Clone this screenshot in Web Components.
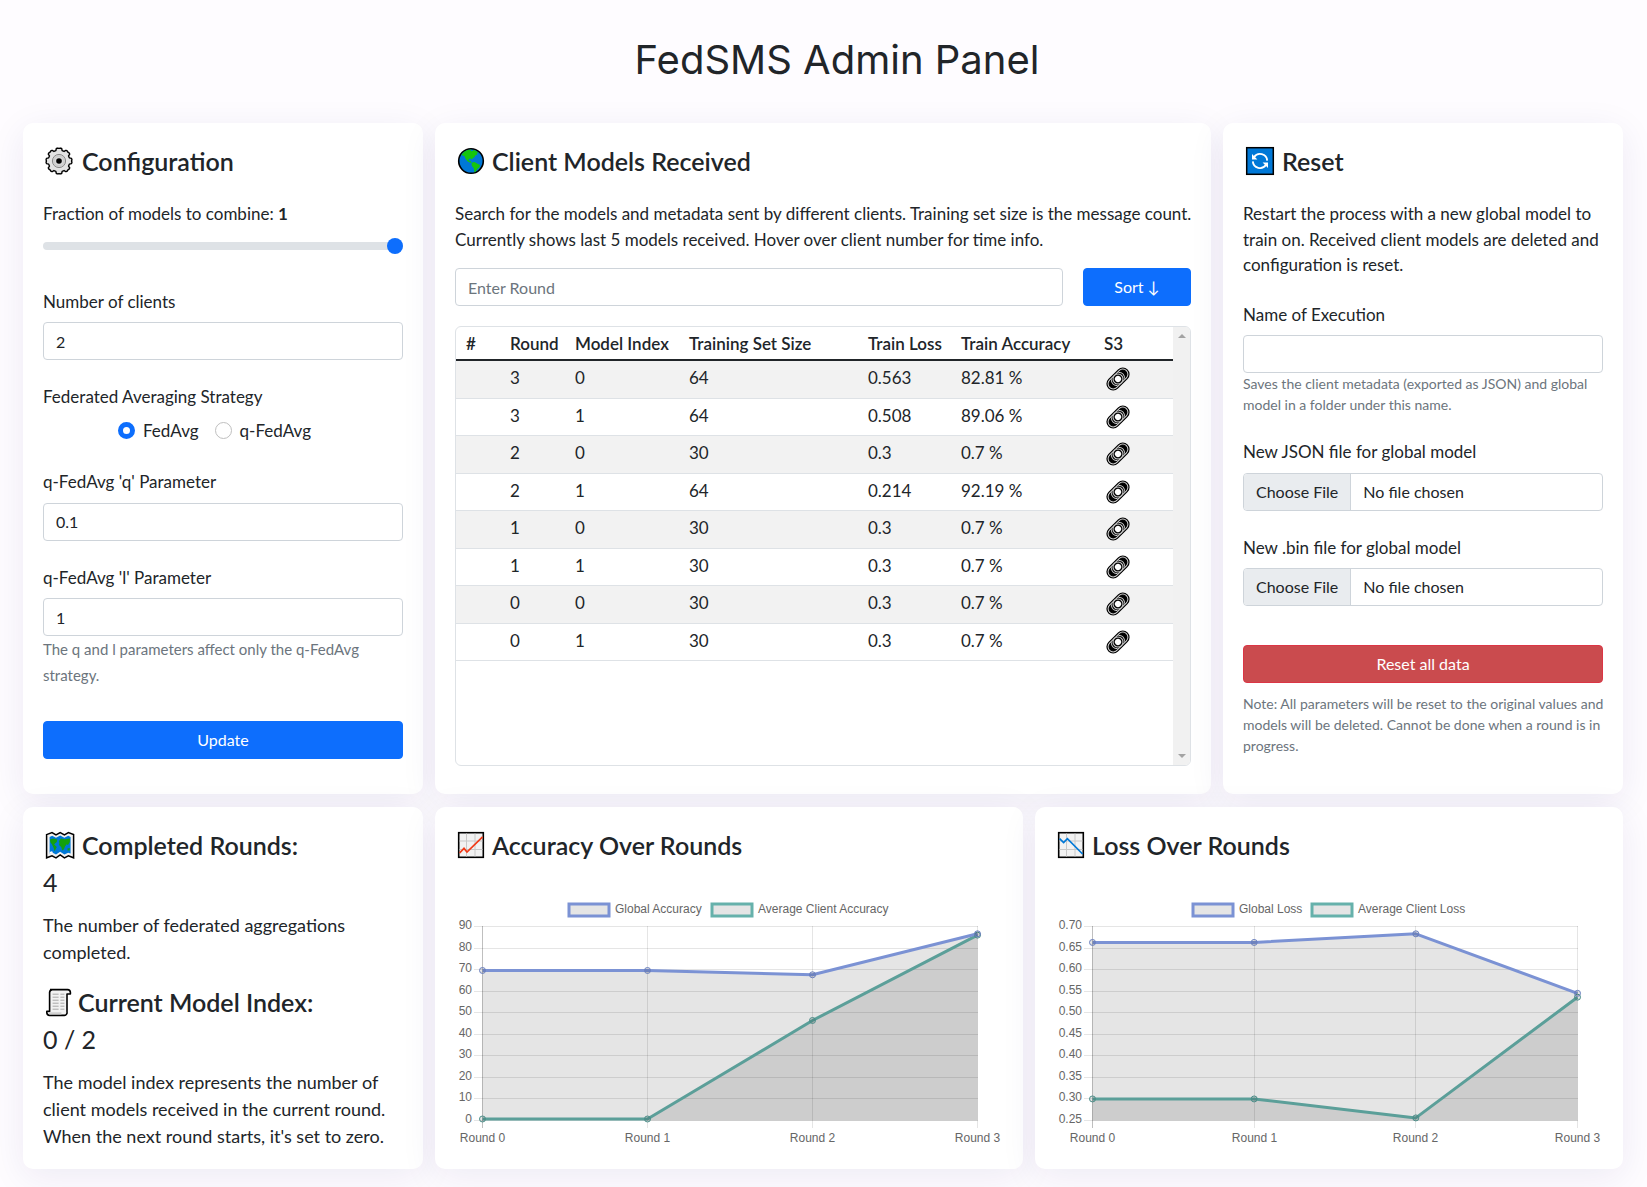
<!DOCTYPE html>
<html lang="en">
<head>
<meta charset="utf-8">
<meta name="viewport" content="width=device-width, initial-scale=1">
<title>FedSMS Admin Panel</title>
<style>
  body { margin: 0; background: #fefcff; color: #212529; font: 17px/1.5 Lato, "Liberation Sans", sans-serif; }
</style>
</head>
<body>
<fed-dashboard></fed-dashboard>

<script>
const BASE = `
  *, *::before, *::after { box-sizing: border-box; }
  :host { display: block; }
  p { margin: 0; }
  label { display: block; margin-bottom: 8px; }
  small { display: block; color: #6c757d; }
`;

function define(name, css, render) {
  customElements.define(name, class extends HTMLElement {
    constructor() {
      super();
      this.attachShadow({ mode: 'open' });
    }
    connectedCallback() {
      this.shadowRoot.innerHTML = `<style>${BASE}${css}</style>${render(this)}`;
    }
  });
}

/* ---------- icons ---------- */
const gearPath = (() => {
  const pts = [];
  for (let i = 0; i < 8; i++) {
    for (const [d, r] of [[-17, 10.8], [-12, 12.8], [-6, 13], [0, 12.6], [6, 13], [12, 12.8], [17, 10.8]]) {
      const a = (i * 45 + d) * Math.PI / 180;
      pts.push((16 + r * Math.sin(a)).toFixed(2) + ' ' + (16 - r * Math.cos(a)).toFixed(2));
    }
  }
  return 'M' + pts.join('L') + 'Z';
})();

const ICONS = {
  gear: [32, `<path d="${gearPath}" fill="#e3e3e3" stroke="#000" stroke-width="1.4" stroke-linejoin="round"/>
    <circle cx="16" cy="16" r="6.6" fill="#d2d2d2" stroke="#8a8a8a"/><circle cx="16" cy="16" r="4.8" fill="#d8d8d8" stroke="#c4c4c4" stroke-width=".6"/>
    <circle cx="16" cy="16" r="2.8"/>`],
  globe: [30, `<circle cx="16" cy="16" r="12.3" fill="#0078d7" stroke="#000" stroke-width="1.6"/>
    <path d="M6.4 10 9.2 6.8 12.6 4.9 16.4 4.4 15.4 6.2 17.6 6 18.4 5 21.4 6 24 8.4 21.8 7.8 22.2 10 20.4 10.2 19.4 12.2 17.6 13.2 17 14.8 15.6 13.4 13.6 14 14 15.8 15.6 16 16.6 17.4 15.4 17.8 12.4 16.2 10.4 13.4 9.4 11 7.6 10.6Z M16.6 17.8 19.6 17 22 18.4 25 20 24.4 22.6 22.4 23.8 21 26.2 19.4 27.4 18.8 23.2 16.8 20.8Z" fill="#16c60c"/>`],
  reset: [32, `<rect x="3.7" y="2.7" width="26.6" height="26.6" fill="#0078d7" stroke="#000" stroke-width="1.5"/>
    <g fill="none" stroke="#fff" stroke-width="1.8"><path d="M11 12.2A7.2 7.2 0 0 1 24.2 15.6"/><path d="M9.8 16.4A7.2 7.2 0 0 0 23 19.8"/></g>
    <path d="M9 9V14.4H14.4Z M25 23V17.6H19.6Z" fill="#fff"/>`],
  map: [32, `<path d="M3.6 5.6 9 3.6 13 6 17.2 3.6 21.4 6 25.4 3.6 30.6 5.6V28.8L25.4 26.8 21.4 28.8 17.2 26 13 28.8 9 26.8 3.6 28.8Z" fill="#f2f2f2" stroke="#000" stroke-width="1.5"/>
    <path d="M6.6 8 9.2 6.8 13 8.8 17.2 6.4 21.4 8.8 25.2 6.8 27.6 8V24.6L25.2 23.8 21.4 25.4 17.2 22.8 13 25.4 9.2 23.6 6.6 24.6Z" fill="#0078d7"/>
    <path d="M7 10.6 10.4 9.4 14.2 10.6 13.8 13 12 14.4 11.2 15.4 13.8 18 12.6 20.2 11.6 22.4 10.8 19.2 9 15.4 7.4 13.2Z M16 12 18 9.4 21.4 10.2 27 9.6 26.8 13 25 16 23.6 15.2 22 17.4 20.8 20.6 19.2 21.4 18.2 18 16 16 16.4 14Z M24.4 19.6 26.8 19 26.6 21.4 24.6 21.6Z" fill="#13a10e"/>
    <path d="M6.6 23 9 22.2 10 23.4 6.8 24.4Z" fill="#fff"/>`],
  scroll: [28, `<path d="M7 3.6H24.6A3 3 0 0 1 27.4 6.4V8H24V25.6A3 3 0 0 1 21.4 29.4H6.6A3 3 0 0 1 3.8 26.6V25.4H6.6V6.4A3 3 0 0 1 9.2 3.6" fill="#f2f2f2" stroke="#000" stroke-width="1.6" stroke-linejoin="round"/>
    <path d="M4.6 26.2H18.4V28.6H6.4Z" fill="#d0d0d0"/>
    <path d="M9.6 8.2H15.6M17.4 8.2H21.4M9.6 11.2H15.6M17.4 11.2H21.4M9.6 14.2H15.6M17.4 14.2H21.4M9.6 17.2H15.6M17.4 17.2H21.4M9.6 20.2H15.6M17.4 20.2H21.4M9.6 23.2H15.6M17.4 23.2H21.4" stroke="#a8a8a8"/>`],
  rise: [30, `<rect x="3.7" y="3.7" width="24.6" height="24.6" fill="#f2f2f2" stroke="#000" stroke-width="1.6"/>
    <path d="M11.5 4.5V27.5M20 4.5V27.5M4.5 12H27.5M4.5 20.5H27.5" stroke="#c8c8c8"/>
    <path d="M4.6 24 9 19.4 12 23 27.6 7.8" fill="none" stroke="#f03a17" stroke-width="1.7"/>`],
  fall: [30, `<rect x="3.7" y="3.7" width="24.6" height="24.6" fill="#f2f2f2" stroke="#000" stroke-width="1.6"/>
    <path d="M11.5 4.5V27.5M20 4.5V27.5M4.5 12H27.5M4.5 20.5H27.5" stroke="#c8c8c8"/>
    <path d="M4.6 9.6 8.6 13.6 12.4 9.6 27.6 25" fill="none" stroke="#0078d7" stroke-width="1.7"/>`],
};

define('emoji-icon', ':host{display:block;flex:none} svg{display:block}', el => {
  const [w, art] = ICONS[el.getAttribute('name')];
  return `<svg width="${w}" height="32" viewBox="0 0 ${w} 32" overflow="visible" aria-hidden="true">${art}</svg>`;
});

define('link-icon', ':host{display:block} svg{display:block}', () => `
  <svg width="28" height="28" viewBox="0 0 28 28" aria-hidden="true">
    <g transform="rotate(-45 14 14)">
      <rect x="1" y="7.8" width="26" height="12.4" rx="6.2" stroke="#000" stroke-width="1.2" fill="#d4d4d4"/>
      <rect x="3.2" y="10" width="21.6" height="8" rx="4" stroke="#000" stroke-width="1.2"/>
      <path d="M9.2 9.8A5 5 0 0 0 9.2 18.2M18.8 9.8A5 5 0 0 1 18.8 18.2" fill="none" stroke="#d4d4d4" stroke-width="1"/>
      <circle cx="14" cy="14" r="5" stroke="#d4d4d4" stroke-width="1"/>
      <circle cx="14" cy="14" r="3.1" fill="#fff"/>
    </g>
  </svg>`);

/* ---------- layout pieces ---------- */
define('panel-card', `
  :host { background: #fff; border-radius: 10px; padding: 20px; box-shadow: 0 8px 36px rgba(40, 30, 110, .08); min-width: 0; }
`, () => '<slot></slot>');

define('panel-heading', `
  h2 { display: flex; align-items: center; gap: 7px; height: 36px; margin: 0; font-size: 25px; font-weight: 600; line-height: 36px; white-space: nowrap; }
`, el => `<h2><emoji-icon name="${el.getAttribute('icon')}"></emoji-icon><slot></slot></h2>`);

const CONTROL = `
  input { display: block; width: 100%; height: 38px; margin: 0; padding: 6px 12px; border: 1px solid #ced4da; border-radius: 4px;
    background: #fff; color: #212529; font: 16px/24px Lato, "Liberation Sans", sans-serif; outline: 0; }
  input::placeholder { color: #6c757d; opacity: 1; }
  input::file-selector-button { height: 36px; margin: -6px 12px -6px -12px; padding: 6px 12px; border: 0 solid #ced4da; border-right-width: 1px;
    border-radius: 0; background: #e9ecef; color: #212529; font: inherit; }
  input[type=file] { overflow: hidden; }
`;

define('form-field', CONTROL + `
  ::slotted(small) { display: block; color: #6c757d; }
`, el => `
  <label for="control">${el.getAttribute('label')}</label>
  <input id="control" type="${el.getAttribute('type') || 'text'}" ${el.hasAttribute('value') ? `value="${el.getAttribute('value')}"` : ''}>
  <slot></slot>`);

define('range-field', `
  output { font-weight: 700; }
  label { margin-bottom: 7px; }
  input { appearance: none; display: block; width: 100%; height: 24px; margin: 0; background: transparent; }
  input::-webkit-slider-runnable-track { height: 8px; border-radius: 8px; background: #dee2e6; }
  input::-webkit-slider-thumb { appearance: none; width: 16px; height: 16px; margin-top: -4px; border-radius: 50%; background: #0d6efd; }
`, () => `
  <label for="fraction">Fraction of models to combine: <output for="fraction">1</output></label>
  <input id="fraction" type="range" min="0" max="1" step="0.1" value="1">`);

define('strategy-picker', `
  fieldset { margin: 0; padding: 0; border: 0; min-width: 0; }
  legend { padding: 0; margin-bottom: 8px; }
  .options { display: flex; justify-content: center; gap: 16px; padding: 0 17px 2px 0; }
  label { display: flex; align-items: center; gap: 8px; margin: 0; }
  input { appearance: none; width: 17px; height: 17px; margin: 0; border: 1px solid #bfbfbf; border-radius: 50%; background: #fff; }
  input:checked { border: 5px solid #0d6efd; }
`, () => `
  <fieldset>
    <legend>Federated Averaging Strategy</legend>
    <div class="options">
      <label><input type="radio" name="strategy" checked>FedAvg</label>
      <label><input type="radio" name="strategy">q-FedAvg</label>
    </div>
  </fieldset>`);

define('action-button', `
  button { display: block; width: 100%; height: 38px; padding: 6px 12px; border: 1px solid #0d6efd; border-radius: 4px; background: #0d6efd;
    color: #fff; font: 16px/24px Lato, "Liberation Sans", sans-serif; cursor: pointer; }
  :host([danger]) button { border-color: #dc3545; background: #ca4b4e; }
`, () => '<button type="button"><slot></slot></button>');

/* ---------- table ---------- */
const ROWS = [
  [3, 0, 64, '0.563', '82.81 %'], [3, 1, 64, '0.508', '89.06 %'],
  [2, 0, 30, '0.3', '0.7 %'], [2, 1, 64, '0.214', '92.19 %'],
  [1, 0, 30, '0.3', '0.7 %'], [1, 1, 30, '0.3', '0.7 %'],
  [0, 0, 30, '0.3', '0.7 %'], [0, 1, 30, '0.3', '0.7 %'],
];

define('models-table', `
  .frame { display: flex; height: 440px; border: 1px solid #dee2e6; border-radius: 6px; overflow: hidden; }
  .body { flex: 1; min-width: 0; overflow: hidden; }
  table { width: 100%; table-layout: fixed; border-collapse: separate; border-spacing: 0; }
  th, td { padding: 4px 0 0 10px; text-align: left; vertical-align: top; white-space: nowrap; }
  th { font-weight: 600; height: 34px; border-bottom: 2px solid #212529; line-height: 26px; }
  td { height: 37px; border-bottom: 1px solid #dee2e6; }
  tr:nth-child(odd) td { height: 38px; background: #f2f2f2; }
  a { display: block; width: 28px; height: 28px; }
  .bar { flex: none; width: 17px; display: flex; flex-direction: column; justify-content: space-between; align-items: center; padding: 7px 0; background: #f1f1f1; }
  .bar i { border: 4px solid transparent; border-top-width: 0; border-bottom-color: #a3a3a3; }
  .bar i:last-child { border-width: 4px 4px 0; border-top-color: #a3a3a3; }
`, () => `
  <div class="frame">
    <div class="body">
      <table>
        <colgroup><col style="width:44px"><col style="width:65px"><col style="width:114px"><col style="width:179px"><col style="width:93px"><col style="width:143px"><col style="width:79px"></colgroup>
        <thead><tr><th>#</th><th>Round</th><th>Model Index</th><th>Training Set Size</th><th>Train Loss</th><th>Train Accuracy</th><th>S3</th></tr></thead>
        <tbody>${ROWS.map(r => `<tr><td></td>${r.map(c => `<td>${c}</td>`).join('')}<td><a href="#" aria-label="Open in S3"><link-icon></link-icon></a></td></tr>`).join('')}</tbody>
      </table>
    </div>
    <div class="bar" aria-hidden="true"><i></i><i></i></div>
  </div>`);

define('models-search', CONTROL + `
  form { display: flex; gap: 20px; }
  input { flex: 1; min-width: 0; }
  action-button { flex: 0 0 108px; }
`, () => `<form><input type="text" placeholder="Enter Round" aria-label="Round"><action-button>Sort ↓</action-button></form>`);

/* ---------- charts ---------- */
const BLUE = '#7b92d4', GREEN = '#66b1ab', FILL = 'rgba(0,0,0,.1)';
const CHARTS = {
  accuracy: {
    ticks: ['90', '80', '70', '60', '50', '40', '30', '20', '10', '0'], min: 0, max: 90, left: 27,
    legend: [[114, 'Global Accuracy'], [257, 'Average Client Accuracy']],
    global: [69.6, 69.6, 67.6, 86.6], client: [0.7, 0.7, 46.4, 86],
  },
  loss: {
    ticks: ['0.70', '0.65', '0.60', '0.55', '0.50', '0.45', '0.40', '0.35', '0.30', '0.25'], min: .25, max: .7, left: 37,
    legend: [[138, 'Global Loss'], [257, 'Average Client Loss']],
    global: [.663, .663, .683, .545], client: [.3, .3, .256, .536],
  },
};

define('line-chart', `
  svg { display: block; width: 100%; height: auto; font: 12px "Liberation Sans", Arial, sans-serif; }
  text { fill: #666; }
`, el => {
  const c = CHARTS[el.getAttribute('data')], top = 33, bottom = 227, right = 522;
  const x = i => c.left + .5 + i * (right - c.left) / 3;
  const y = v => bottom + .5 - (v - c.min) / (c.max - c.min) * (bottom - top);
  const rows = c.ticks.map((t, i) => {
    const py = Math.round(top + i * (bottom - top) / 9);
    return `<path d="M${c.left - 8} ${py + .5}H${right + 1}" stroke="${FILL}"/><text x="${c.left - 10}" y="${py + 3}" text-anchor="end">${t}</text>`;
  }).join('');
  const cols = [0, 1, 2, 3].map(i => {
    const px = Math.floor(x(i)) + .5;
    return `<path d="M${px} ${top}V${bottom + 8}" stroke="rgba(0,0,0,${i ? .1 : .25})"/><text x="${px}" y="249" text-anchor="middle">Round ${i}</text>`;
  }).join('');
  const series = (data, color) => {
    const line = 'M' + data.map((v, i) => `${x(i)} ${y(v)}`).join('L');
    return `<path d="${line}V${bottom + .5}H${x(0)}Z" fill="${FILL}"/><path d="${line}" fill="none" stroke="${color}" stroke-width="3" stroke-linejoin="round"/>`;
  };
  const dots = (data, color) => data.map((v, i) => `<circle cx="${x(i)}" cy="${y(v)}" r="3" fill="${FILL}" stroke="${color}"/>`).join('');
  const legend = c.legend.map(([lx, name], i) =>
    `<rect x="${lx}" y="11" width="40" height="12" fill="#e5e5e5" stroke="${i ? GREEN : BLUE}" stroke-width="3"/><text x="${lx + 46}" y="20">${name}</text>`).join('');
  return `<svg viewBox="0 0 548 256" role="img">${legend}${rows}${cols}
    ${series(c.client, GREEN)}${series(c.global, BLUE)}${dots(c.client, '#4b8f8a')}${dots(c.global, '#6a80c0')}</svg>`;
});

/* ---------- page ---------- */
define('stat-block', `
  .value { margin-top: 1px; font-size: 25px; line-height: 36px; }
  p { margin-top: 12px; font-size: 18px; }
`, el => `
  <panel-heading icon="${el.getAttribute('icon')}">${el.getAttribute('label')}</panel-heading>
  <div class="value">${el.getAttribute('value')}</div>
  <p><slot></slot></p>`);

define('fed-dashboard', `
  :host { padding: 0 24px 20px 23px; }
  h1 { margin: 0; padding: 36px 0 39px 28px; text-align: center; font: 400 40px/48px Inter, sans-serif; }
  .row { display: grid; gap: 12px; }
  .top { grid-template-columns: 100fr 194fr 100fr; margin-bottom: 13px; }
  .bottom { grid-template-columns: 100fr 147fr 147fr; }
  .fields { display: flex; flex-direction: column; gap: 24px; margin-top: 22px; }
  .fields range-field { margin-bottom: 7px; }
  .fields .submit { margin-top: 9px; }
  .search { display: flex; flex-direction: column; gap: 16px; margin-top: 22px; }
  .search p, .note { margin-right: -12px; }
  .search models-table { margin-top: 4px; }
  .help { font-size: 15px; line-height: 26px; }
  .note { font-size: 14px; line-height: 21px; }
  .danger { display: flex; flex-direction: column; gap: 10px; margin-top: 15px; }
  .stats { display: flex; flex-direction: column; gap: 18px; }
  line-chart { margin-top: 30px; }
  .top panel-card { padding-bottom: 28px; }
  .bottom panel-card { padding-bottom: 19px; }
`, () => `
  <h1>FedSMS Admin Panel</h1>
  <main>
    <div class="row top">
      <panel-card>
        <panel-heading icon="gear">Configuration</panel-heading>
        <div class="fields">
          <range-field></range-field>
          <form-field label="Number of clients" value="2"></form-field>
          <strategy-picker></strategy-picker>
          <form-field label="q-FedAvg 'q' Parameter" value="0.1"></form-field>
          <form-field label="q-FedAvg 'l' Parameter" value="1"><small class="help">The q and l parameters affect only the q-FedAvg strategy.</small></form-field>
          <action-button class="submit">Update</action-button>
        </div>
      </panel-card>
      <panel-card>
        <panel-heading icon="globe">Client Models Received</panel-heading>
        <div class="search">
          <p>Search for the models and metadata sent by different clients. Training set size is the message count. Currently shows last 5 models received. Hover over client number for time info.</p>
          <models-search></models-search>
          <models-table></models-table>
        </div>
      </panel-card>
      <panel-card>
        <panel-heading icon="reset">Reset</panel-heading>
        <div class="fields">
          <p>Restart the process with a new global model to train on. Received client models are deleted and configuration is reset.</p>
          <form-field label="Name of Execution"><small class="note">Saves the client metadata (exported as JSON) and global model in a folder under this name.</small></form-field>
          <form-field label="New JSON file for global model" type="file"></form-field>
          <form-field label="New .bin file for global model" type="file"></form-field>
          <div class="danger">
            <action-button danger>Reset all data</action-button>
            <small class="note">Note: All parameters will be reset to the original values and models will be deleted. Cannot be done when a round is in progress.</small>
          </div>
        </div>
      </panel-card>
    </div>
    <div class="row bottom">
      <panel-card>
        <div class="stats">
          <stat-block icon="map" label="Completed Rounds:" value="4">The number of federated aggregations completed.</stat-block>
          <stat-block icon="scroll" label="Current Model Index:" value="0 / 2">The model index represents the number of client models received in the current round. When the next round starts, it's set to zero.</stat-block>
        </div>
      </panel-card>
      <panel-card>
        <panel-heading icon="rise">Accuracy Over Rounds</panel-heading>
        <line-chart data="accuracy"></line-chart>
      </panel-card>
      <panel-card>
        <panel-heading icon="fall">Loss Over Rounds</panel-heading>
        <line-chart data="loss"></line-chart>
      </panel-card>
    </div>
  </main>`);
</script>
</body>
</html>
